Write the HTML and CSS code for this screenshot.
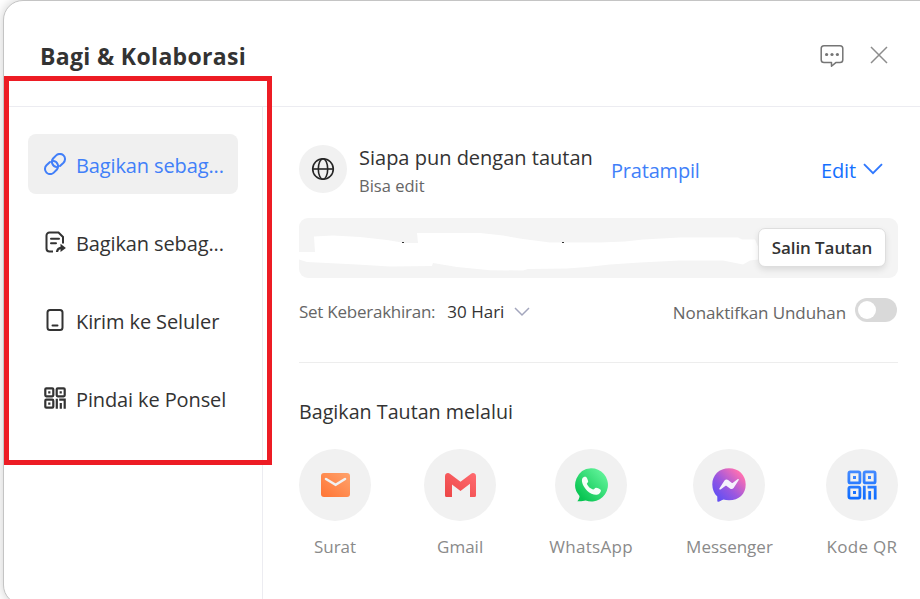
FILE: index.html
```html
<!DOCTYPE html>
<html lang="id">
<head>
  <meta charset="UTF-8" />
  <meta name="viewport" content="width=device-width,initial-scale=1" />
  <title>Bagi &amp; Kolaborasi</title>
  <link rel="stylesheet" href="styles.css">
</head>
<body>
  <div class="dialog">
    <header>
      <h1>Bagi &amp; Kolaborasi</h1>
      <div class="header-actions">
        <svg width="24" height="24" viewBox="0 0 24 24" fill="none" stroke="#757575" stroke-width="1.5" stroke-linejoin="round">
          <path d="M4 1.8h16a2.8 2.8 0 0 1 2.8 2.8v11.2a2.8 2.8 0 0 1-2.8 2.8h-4.2l-4.300 3.700v-3.700H4a2.800 2.800 0 0 1-2.800-2.800V4.600A2.800 2.800 0 0 1 4 1.800z"/>
          <g fill="#757575" stroke="none"><circle cx="6.600" cy="10.500" r="1.600"/><circle cx="12" cy="10.500" r="1.600"/><circle cx="17.400" cy="10.500" r="1.600"/></g>
        </svg>
        <svg class="close" width="18" height="18" viewBox="0 0 18 18" fill="none" stroke="#8c8c8c" stroke-width="1.5">
          <path d="M1 1l16 16M17 1L1 17"/>
        </svg>
      </div>
    </header>

    <div class="content">
      <nav>
        <a class="nav-item active">
          <svg width="22" height="22" viewBox="1 1 22 22" fill="none" stroke="#417ff9" stroke-width="2" stroke-linecap="round">
            <path d="M13.300 14.900a5.200 5.200 0 0 1-3.200-8.400l3.100-3.100a5 5 0 0 1 7.300 7.300l-3.500 3.300"/>
            <path d="M10.700 9.100a5.200 5.200 0 0 1 3.200 8.400l-3.100 3.100a5 5 0 0 1-7.300-7.300l3.500-3.300"/>
          </svg>
          <span>Bagikan sebag...</span>
        </a>
        <a class="nav-item">
          <svg width="22" height="22" viewBox="0 0 22 22" fill="none" stroke="#333" stroke-width="2">
            <path d="M9 20.500H5.500a3 3 0 0 1-3-3v-13a3 3 0 0 1 3-3h9l4.500 4.500v6.500"/>
            <path d="M7 7.800h8M7 12.200h5" stroke-linecap="round"/>
            <path d="M13 21c.3-3 2-4.200 5-4.200" stroke-width="2.300"/>
            <path d="M16.500 12.800l5.400 4.200-5.400 4.100z" fill="#333" stroke="none"/>
          </svg>
          <span>Bagikan sebag...</span>
        </a>
        <a class="nav-item">
          <svg width="22" height="22" viewBox="0 0 22 22" fill="none" stroke="#333" stroke-width="2">
            <rect x="3.500" y="1" width="15" height="20" rx="2.500"/>
            <path d="M8.500 16.500h5" stroke-linecap="round"/>
          </svg>
          <span>Kirim ke Seluler</span>
        </a>
        <a class="nav-item">
          <svg width="22" height="22" viewBox="0 0 22 22" fill="none" stroke="#333" stroke-width="2.200">
            <rect x="1.300" y="1.300" width="8" height="8" rx="1"/>
            <rect x="12.700" y="1.300" width="8" height="8" rx="1"/>
            <rect x="1.300" y="12.700" width="8" height="8" rx="1"/>
            <path d="M4.200 5.300h2.200M15.600 5.300h2.200M4.200 16.700h2.200"/>
            <path d="M12.800 11.700v10M15.200 12.700h5.500v9M16.800 16v5.700"/>
          </svg>
          <span>Pindai ke Ponsel</span>
        </a>
      </nav>

      <main>
        <section class="access">
          <div class="circle globe">
            <svg width="24" height="24" viewBox="0 0 24 24" fill="none" stroke="#262626" stroke-width="1.6">
              <circle cx="12" cy="12" r="10.300"/>
              <ellipse cx="12" cy="12" rx="4.700" ry="10.300"/>
              <path d="M1.700 12h20.600"/>
            </svg>
          </div>
          <div class="who">
            <p class="who-title">Siapa pun dengan tautan</p>
            <p class="who-sub">Bisa edit</p>
          </div>
          <a class="preview">Pratampil</a>
          <a class="edit"><span>Edit</span>
            <svg width="20" height="12" viewBox="0 0 20 12" fill="none" stroke="#2f78ff" stroke-width="1.900"><path d="M1 1.200l9 9 9-9"/></svg>
          </a>
        </section>

        <section class="link-box">
          <svg class="redaction" width="599" height="60" viewBox="0 0 599 60">
            <path fill="#fff" d="M0 34h16l-1-15.500 19-1 27 1.500 27 3 18 3h13l-1-10h63l23 2.500 20 3.500 27 3.500h50l25-1 18-2 37-2h58l4 2h13l3 7v13l-8 1-7 4-10-2-10-2h-43l-40 2-30 2-23 2.500-20 1.500-39 .5-5 1.500-33-.3-33-3.200-24-4-1 3-42 .5-33-2-50-2.500-8-2.500z"/>
            <path fill="#333" d="M103 24h2v1h-2zM263 24h2v1h-2z"/>
          </svg>
          <button class="copy-btn">Salin Tautan</button>
        </section>

        <section class="options">
          <span class="expiry-label">Set Keberakhiran:</span>
          <span class="expiry-value">30 Hari</span>
          <svg width="16" height="10" viewBox="0 0 16 10" fill="none" stroke="#a3a6bd" stroke-width="1.500"><path d="M1 1l7 7 7-7"/></svg>
          <span class="disable-label">Nonaktifkan Unduhan</span>
          <span class="toggle"></span>
        </section>

        <h2>Bagikan Tautan melalui</h2>

        <section class="apps">
          <a class="app">
            <div class="circle">
              <svg width="36" height="36" viewBox="0 0 36 36">
                <defs><linearGradient id="mail" x1="0" y1="1" x2="1" y2="0"><stop stop-color="#ff7433"/><stop offset="1" stop-color="#ffa36d"/></linearGradient></defs>
                <rect x="4" y="6" width="29" height="24" rx="3" fill="url(#mail)"/>
                <path d="M9 12l9.600 5.800 9.400-5.800" fill="none" stroke="#f1f1f1" stroke-width="2.600" stroke-linecap="round"/>
              </svg>
            </div>
            <span>Surat</span>
          </a>
          <a class="app">
            <div class="circle">
              <svg width="36" height="36" viewBox="0 0 36 36">
                <defs><linearGradient id="gmail" x1="0" y1="1" x2="1" y2="0"><stop stop-color="#ec4646"/><stop offset="1" stop-color="#ff6b70"/></linearGradient></defs>
                <path fill="url(#gmail)" d="M3 9a3 3 0 0 1 4.900-2.300L18.500 14.800 29.100 6.700A3 3 0 0 1 34 9v19.500a1.500 1.500 0 0 1-1.500 1.500H28V16.800L18.500 24 10 17.600V30H4.500A1.500 1.500 0 0 1 3 28.500z"/>
              </svg>
            </div>
            <span>Gmail</span>
          </a>
          <a class="app wide">
            <div class="circle">
              <svg width="36" height="36" viewBox="0 0 36 36">
                <defs><linearGradient id="wa" x1="0" y1="1" x2="1" y2="0"><stop offset=".15" stop-color="#08c552"/><stop offset=".85" stop-color="#5ef197"/></linearGradient></defs>
                <path fill="url(#wa)" d="M18 1.300a16.600 16.600 0 1 1-5.300 32.200c-2.500.5-4.600 1-8.400.7 1.600-1.700 2.200-3.500 2.200-5.200A16.600 16.600 0 0 1 18 1.300z"/>
                <path fill="#f4fff8" d="M9.200 11.800c.7-1.600 2.300-2.200 4-1.900 1 1.200 1.600 2.800 2 4.500-.2 1.300-1.500 1.800-1.300 2.700 1.300 2.700 3.300 4.500 6.100 5.500 1.300.1 1.600-1.700 3-1.800 1.800.3 3.800 1.200 4.900 2.200.1 2.300-1.500 4.300-4 4.800-3 .4-6.900-1.300-9.800-4.100-3.300-3.300-6.100-8.600-4.900-11.900z"/>
              </svg>
            </div>
            <span>WhatsApp</span>
          </a>
          <a class="app">
            <div class="circle">
              <svg width="36" height="36" viewBox="0 0 36 36">
                <defs><linearGradient id="msg" x1="0" y1="1" x2="1" y2="0"><stop offset=".15" stop-color="#6550f2"/><stop offset=".45" stop-color="#9c57df"/><stop offset=".85" stop-color="#ff70b1"/></linearGradient></defs>
                <path fill="url(#msg)" d="M18 1.300c9.700 0 16.700 6.700 16.700 16.200S28 33.300 18 33.300c-2.200 0-4-.3-5.500-.8-1.600.5-2.900 1.500-5 2.200-.6.200-1.200-.3-1.200-1v-4.200C3.200 26.700 1.300 22.500 1.300 17.500 1.300 8 8.300 1.300 18 1.300z"/>
                <path fill="#f4f1fc" d="M8.500 21.300l5-7.700c.8-1.200 2.400-1.500 3.600-.6l3.500 2.700c.4.300.9.300 1.300 0l4.600-3.400c.9-.7 1.700.1 1.100.9l-5 7.700c-.8 1.200-2.400 1.500-3.600.6l-3.400-2.600c-.4-.3-.9-.3-1.300 0l-4.700 3.500c-.8.600-1.700-.2-1.100-1.100z"/>
              </svg>
            </div>
            <span>Messenger</span>
          </a>
          <a class="app wide">
            <div class="circle">
              <svg width="30" height="30" viewBox="0 0 30 30" fill="none" stroke="url(#qr)" stroke-width="2.800">
                <defs><linearGradient id="qr" gradientUnits="userSpaceOnUse" x1="15" y1="0" x2="15" y2="30"><stop stop-color="#468bff"/><stop offset="1" stop-color="#0c6bff"/></linearGradient></defs>
                <rect x="1.900" y="1.900" width="11" height="11" rx="1.500"/>
                <rect x="17.100" y="1.900" width="11" height="11" rx="1.500"/>
                <rect x="1.900" y="17.100" width="11" height="11" rx="1.500"/>
                <g fill="url(#qr)" stroke="none"><rect x="6" y="6" width="3" height="3"/><rect x="21" y="6" width="3" height="3"/><rect x="6" y="21" width="3" height="3"/></g>
                <path d="M17.300 15.700v13.800M20.500 17.100h7.700v12.400M22.700 21v8.500"/>
              </svg>
            </div>
            <span>Kode QR</span>
          </a>
        </section>
      </main>
    </div>
  </div>
  <div class="highlight"></div>
</body>
</html>
```

FILE: styles.css
```css
* {
  box-sizing: border-box;
}
body {
  margin: 0;
  height: 599px;
  overflow: hidden;
  background: #fff;
  font-family: 'Segoe UI', 'Open Sans', sans-serif;
  color: #333;
}
h1, h2, p {
  margin: 0;
}
svg {
  display: block;
  flex-shrink: 0;
}
.dialog {
  width: 960px;
  height: 605px;
  margin-left: 3px;
  background: #fff;
  border: 1px solid #c4c4c4;
  border-radius: 20px;
  box-shadow: 0 0 12px rgba(0, 0, 0, 0.2);
}

header {
  width: 916px;
  height: 106px;
  padding: 4px 32px 0 36px;
  display: flex;
  align-items: center;
  justify-content: space-between;
  border-bottom: 1px solid #ececf1;
}
h1 {
  font-size: 23px;
  line-height: 32px;
  letter-spacing: 0.33px;
}
.header-actions {
  display: flex;
  align-items: center;
  gap: 26px;
}
.close {
  margin-bottom: 2px;
}

.content {
  display: flex;
  width: 916px;
  height: 497px;
}
nav {
  width: 259px;
  padding: 27px 24px;
  display: flex;
  flex-direction: column;
  gap: 18px;
  border-right: 1px solid #ececf1;
}
.nav-item {
  height: 60px;
  padding-left: 16px;
  display: flex;
  align-items: center;
  gap: 10px;
  border-radius: 8px;
  font-size: 20px;
  letter-spacing: -0.12px;
  white-space: nowrap;
}
.nav-item span {
  padding-top: 3px;
}
.nav-item.active {
  background: #f0f0f0;
  color: #417ff9;
}

main {
  width: 657px;
  padding: 38px 22px 0 36px;
}
.circle {
  width: 72px;
  height: 72px;
  display: flex;
  align-items: center;
  justify-content: center;
  border-radius: 50%;
  background: #f1f1f1;
}
.access {
  height: 48px;
  display: flex;
  align-items: center;
  white-space: nowrap;
}
.globe {
  width: 48px;
  height: 48px;
}
.who {
  width: 234px;
  margin-left: 12px;
  padding-top: 4px;
}
.who-title {
  font-size: 20px;
  line-height: 28px;
}
.who-sub {
  font-size: 16.5px;
  line-height: 27px;
  color: #666;
}
.preview {
  margin-left: 18px;
  padding-top: 2px;
  font-size: 20px;
  letter-spacing: -0.2px;
  color: #417ff9;
}
.edit {
  margin-left: auto;
  margin-right: 15px;
  display: flex;
  align-items: center;
  gap: 7px;
  font-size: 20px;
  letter-spacing: -0.15px;
  color: #1470ff;
}
.edit span {
  padding-top: 2px;
}

.link-box {
  position: relative;
  height: 60px;
  margin-top: 25px;
  padding-right: 12px;
  display: flex;
  align-items: center;
  justify-content: flex-end;
  border-radius: 9px;
  background: #f4f4f4;
}
.redaction {
  position: absolute;
  top: 0;
  left: 0;
}
.copy-btn {
  position: relative;
  width: 128px;
  height: 39px;
  margin-bottom: 1px;
  padding: 0;
  border: 1px solid #dedede;
  border-radius: 7px;
  background: #fff;
  box-shadow: 0 3px 6px rgba(0, 0, 0, 0.1);
  font: 600 17px 'Segoe UI', 'Open Sans', sans-serif;
  letter-spacing: -0.1px;
  color: #333;
}

.options {
  height: 85px;
  display: flex;
  align-items: center;
  padding-bottom: 17px;
  border-bottom: 1px solid #ededed;
  font-size: 17px;
  color: #666;
  white-space: nowrap;
}
.expiry-label {
  letter-spacing: -0.25px;
}
.expiry-value {
  margin: 0 10px 0 12px;
  color: #333;
}
.disable-label {
  margin-left: auto;
  padding-top: 1px;
  letter-spacing: -0.1px;
}
.toggle {
  width: 42px;
  height: 24px;
  margin: -4px 1px 0 9px;
  padding: 3px;
  border-radius: 12px;
  background: #d9d9d9;
}
.toggle::before {
  content: "";
  display: block;
  width: 18px;
  height: 18px;
  border-radius: 50%;
  background: #fff;
}

h2 {
  margin-top: 34px;
  font-size: 19.7px;
  font-weight: 400;
  line-height: 30px;
}
.apps {
  margin-top: 22px;
  display: flex;
  justify-content: space-between;
}
.app {
  display: flex;
  flex-direction: column;
  align-items: center;
  gap: 13px;
  font-size: 17px;
  line-height: 26px;
  color: #8a8a8a;
}
.app.wide {
  letter-spacing: 0.3px;
}

/* red frame around the sharing menu */
.highlight {
  position: absolute;
  left: 4px;
  top: 76px;
  width: 268px;
  height: 389px;
  border: 5px solid #ed1c24;
}
```
